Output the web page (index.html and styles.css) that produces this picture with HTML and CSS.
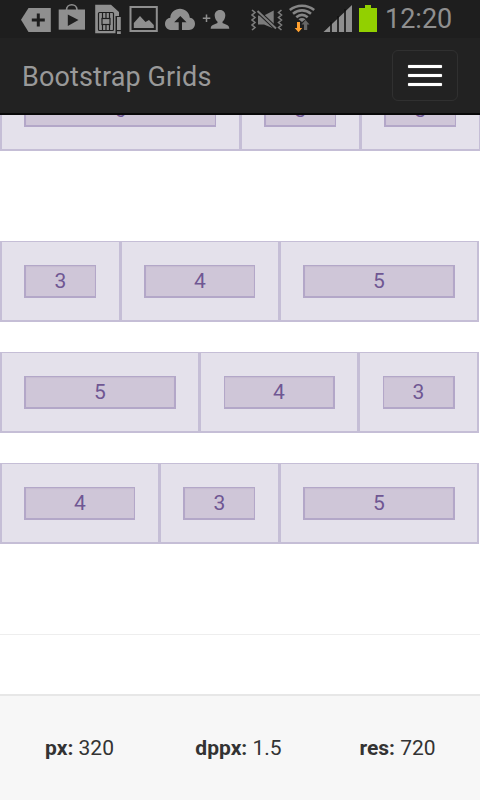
FILE: index.html
```
<!DOCTYPE html>
<html lang="en">
<head>
<meta charset="utf-8">
<title>Bootstrap Grids</title>
<link rel="stylesheet" href="styles.css">
</head>
<body>
<div class="status">
  <svg class="status-icons" width="380" height="38" viewBox="0 0 380 38" fill="#8f8f8f">
    <path d="M21 19.700L28.500 8H50.800V32H28.500Z"/>
    <path d="M38.300 13.500V26.500M31.800 20H44.800" stroke="#1e1e1e" stroke-width="3"/>
    <path d="M58.700 9.500H85V29.700H58.700Z"/>
    <path d="M66.500 10C66.500 3 77 3 77 10" fill="none" stroke="#8f8f8f" stroke-width="1.700"/>
    <path d="M67.800 14.500L78.500 20L67.800 26Z" fill="#1e1e1e"/>
    <path d="M95.200 4.700H111L119 12V16H115.500V33.200H95.200Z"/>
    <g fill="none" stroke="#1e1e1e" stroke-width="1.200">
      <rect x="98.500" y="12.500" width="15" height="18" rx="1"/>
      <rect x="102" y="18.500" width="8" height="6"/>
      <path d="M102.500 12.500V18.500M106 12.500V18.500M109.500 12.500V18.500M102.500 24.500V30.500M106 24.500V30.500M109.500 24.500V30.500"/>
    </g>
    <path d="M117 17H120.800V30H117ZM117 31.200H120.800V34H117Z"/>
    <rect x="130.500" y="7" width="26.300" height="24" fill="none" stroke="#8f8f8f" stroke-width="2"/>
    <path d="M133.800 28V23L140 16L145.500 22L149 20L153.800 25V28Z"/>
    <path d="M171.500 30C167.500 30 165 27.300 165 24C165 20.500 167.500 18 170.300 17.800C170.500 12.500 175 8.800 180 8.800C185 8.800 189.300 12.300 189.800 17.700C193 18 195 20.500 195 23.800C195 27.500 192.500 30 189 30Z"/>
    <path d="M180.300 16L186.500 22.300H182V30H178.700V22.300H174.200Z" fill="#1e1e1e"/>
    <path d="M206.500 14.500V22M202.800 18.200H210.300" stroke="#8f8f8f" stroke-width="1.500"/>
    <path d="M220 10C223.400 10 225.500 12.500 225.300 15.800C225.100 18.700 223.700 20.700 222.500 21.700V23C225.500 24.500 229.300 24.800 229.300 28.700H210.700C210.700 24.800 214.500 24.500 217.500 23V21.700C216.300 20.700 214.900 18.700 214.700 15.800C214.500 12.500 216.600 10 220 10Z"/>
    <g fill="none" stroke="#7c7c7c" stroke-width="1.600">
      <path d="M252 10L255 12.500L252 15L255 17.500L252 20L255 22.500L252 25L255 27.500L252 30M281.500 10L278.500 12.500L281.500 15L278.500 17.500L281.500 20L278.500 22.500L281.500 25L278.500 27.500L281.500 30"/>
    </g>
    <path d="M258 15.500H264L273.700 10.500V28.500L264 24.500H258Z" fill="#7c7c7c"/>
    <path d="M257.500 11L276 28.500" stroke="#1e1e1e" stroke-width="4"/>
    <path d="M257.500 11L276 28.500" stroke="#7c7c7c" stroke-width="2"/>
    <g fill="none" stroke="#858585" stroke-width="2.600">
      <path d="M289.800 10C297 4.300 307 4.300 314.200 10M293 13.700C298.500 9.200 305.500 9.200 311 13.700M296.300 17.300C300 14.200 304 14.200 307.700 17.300"/>
    </g>
    <path d="M298.500 19.300C300.800 17.700 303.200 17.700 305.500 19.300L302 22Z" fill="#858585"/>
    <path d="M305.500 20L309.500 24.500H307.200V30H304V24.500H301.500Z" fill="#666"/>
    <path d="M297 22H300V28H302.300L298.500 32.300L294.700 28H297Z" fill="#ffa02f"/>
    <path d="M323.500 32L352 5V32Z"/>
    <path d="M331 22V32M338 16V32M345 9V32" stroke="#111" stroke-width="1.600"/>
    <path d="M359 8H365V5H371V8H377V32H359Z" fill="#92d000"/>
  </svg>
  <span class="clock">12:20</span>
</div>
<header class="navbar">
  <span class="brand">Bootstrap Grids</span>
  <div class="toggle"><i class="bar"></i><i class="bar"></i><i class="bar"></i></div>
</header>
<main class="content">
  <div class="grid halves">
    <div class="cell thin-right"><div class="box">6</div></div>
    <div class="cell thin-right"><div class="box">3</div></div>
    <div class="cell thin-right"><div class="box">3</div></div>
  </div>
  <div class="grid cols-345 section">
    <div class="cell thin-right"><div class="box">3</div></div>
    <div class="cell thin-right"><div class="box">4</div></div>
    <div class="cell"><div class="box">5</div></div>
  </div>
  <div class="grid cols-543">
    <div class="cell"><div class="box">5</div></div>
    <div class="cell thin-left"><div class="box">4</div></div>
    <div class="cell thin-left"><div class="box">3</div></div>
  </div>
  <div class="grid cols-435">
    <div class="cell thin-right"><div class="box">4</div></div>
    <div class="cell thin-right"><div class="box">3</div></div>
    <div class="cell"><div class="box">5</div></div>
  </div>
  <hr class="rule">
</main>
<footer class="footer">
  <div class="stat"><b>px:</b> 320</div>
  <div class="stat"><b>dppx:</b> 1.5</div>
  <div class="stat"><b>res:</b> 720</div>
</footer>
</body>
</html>
```
FILE: styles.css
```
* { box-sizing: border-box; }
body {
  margin: 0;
  height: 800px;
  overflow: hidden;
  display: flex;
  flex-direction: column;
  background: #fff;
  color: #333;
  font: 21px/30px Roboto, sans-serif;
}
.status {
  height: 38px;
  flex: none;
  display: flex;
  background: #1e1e1e;
}
.status-icons { display: block; flex: none; }
.clock {
  padding-left: 5px;
  color: #8f8f8f;
  font-size: 27px;
  line-height: 39px;
}
.navbar {
  position: relative;
  z-index: 1;
  flex: none;
  height: 77px;
  padding: 0 22px;
  display: flex;
  justify-content: space-between;
  align-items: center;
  background: #222;
  border-bottom: 2px solid #080808;
}
.brand {
  padding-top: 2px;
  color: #999;
  font-size: 27px;
  line-height: 30px;
  letter-spacing: 0.12px;
}
.toggle {
  width: 66px;
  height: 51px;
  border: 1px solid #303030;
  border-radius: 6px;
  display: flex;
  flex-direction: column;
  align-items: center;
  justify-content: center;
  gap: 6px;
}
.bar {
  width: 34px;
  height: 3px;
  border-radius: 1px;
  background: #fff;
  box-shadow: 0 0 1px #bbb;
}
.content { height: 624px; flex: none; margin-top: -45px; }
.grid { display: grid; width: 479px; margin-bottom: 30px; }
.halves { width: 480px; grid-template-columns: 240px 120px 120px; }
.section { margin-top: 90px; }
.cols-345 { grid-template-columns: 120px 159px 200px; }
.cols-543 { grid-template-columns: 200px 159px 120px; }
.cols-435 { grid-template-columns: 159px 120px 200px; }
.cell {
  height: 81px;
  padding: 23px 22px 22px;
  background: #e4e1eb;
  border: 2px solid #c5bed6;
  border-top-width: 1px;
}
.box {
  height: 33px;
  background: #cfc6d8;
  border: 2px solid #b3a7c8;
  border-top-width: 1px;
  color: #6f5793;
  text-align: center;
  line-height: 30px;
  box-shadow: inset 0 1px 1px #c5bbd1;
}
.thin-right { padding-right: 23px; border-right-width: 1px; }
.thin-right .box { border-right-width: 1px; }
.thin-left { padding-left: 23px; border-left-width: 1px; }
.thin-left .box { border-left-width: 1px; }
.rule { margin: 90px 0 0; border: 0; height: 1px; background: #eee; }
.footer {
  flex: 1;
  display: grid;
  grid-template-columns: 159px 159px 159px;
  align-items: center;
  background: #f7f7f7;
  border-top: 2px solid #e7e7e7;
}
.stat { text-align: center; }
b { font-weight: 700; }
```
